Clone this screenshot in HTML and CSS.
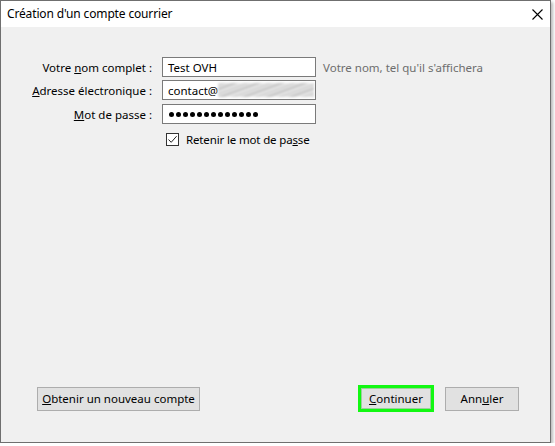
FILE: index.html
```html
<!DOCTYPE html>
<html lang="fr">
<head>
<meta charset="utf-8">
<title>Création d'un compte courrier</title>
<link rel="stylesheet" href="styles.css">
</head>
<body>
<div class="window">
  <div class="titlebar">
    <span class="title">Création d'un compte courrier</span>
    <svg class="close" width="11" height="11" viewBox="0 0 11 11"><path d="M0.5 0.5 L10.5 10.5 M10.5 0.5 L0.5 10.5" stroke="#000" stroke-width="1.1" fill="none"/></svg>
  </div>
  <div class="content">
    <div class="form">
      <div class="row">
        <label class="label">Votre <u>n</u>om complet :</label>
        <div class="field">Test OVH</div>
        <span class="hint">Votre nom, tel qu'il s'affichera</span>
      </div>
      <div class="row row2">
        <label class="label"><u>A</u>dresse électronique :</label>
        <div class="field">contact@<span class="smudge"></span></div>
      </div>
      <div class="row row3">
        <label class="label"><u>M</u>ot de passe :</label>
        <div class="field dots">
          <i></i><i></i><i></i><i></i><i></i><i></i><i></i><i></i><i></i><i></i><i></i><i></i><i></i>
        </div>
      </div>
      <div class="checkrow">
        <span class="checkbox"><svg width="11" height="11" viewBox="0 0 11 11"><path d="M1.5 5.5 L4.2 8.3 L9.6 2.2" stroke="#222" stroke-width="1" fill="none"/></svg></span>
        <span>Retenir le mot de pa<u>s</u>se</span>
      </div>
    </div>
    <div class="footer">
      <button class="btn btn-new"><u>O</u>btenir un nouveau compte</button>
      <span class="focus"><button class="btn btn-go"><u>C</u>ontinuer</button></span>
      <button class="btn btn-cancel">Ann<u>u</u>ler</button>
    </div>
  </div>
</div>
</body>
</html>
```
FILE: styles.css
```css
html, body {
  margin: 0;
  padding: 0;
  background: #ffffff;
}
body {
  font-family: "Noto Sans", "Open Sans", sans-serif;
  font-size: 11.5px;
  color: #000;
}
.window {
  width: 551px;
  height: 443px;
  box-sizing: border-box;
  border: 1px solid #6f6f6f;
  display: flex;
  flex-direction: column;
  box-shadow: 2px 2px 3px rgba(0, 0, 0, 0.28);
}
.titlebar {
  height: 26px;
  flex: none;
  background: #fff;
  display: flex;
  align-items: center;
  padding-left: 6px;
  padding-right: 7px;
}
.title {
  font-size: 12px;
  letter-spacing: -0.15px;
  margin-top: -1px;
}
.close {
  margin-left: auto;
  display: block;
}
.content {
  flex: 1;
  background: #f0f0f0;
  display: flex;
  flex-direction: column;
  padding-top: 30px;
}
.form {
  display: flex;
  flex-direction: column;
}
.row {
  display: flex;
  align-items: center;
  height: 20px;
}
.row2 { margin-top: 3px; }
.row3 { margin-top: 4px; }
.label {
  width: 151px;
  text-align: right;
  margin-right: 10px;
  flex: none;
}
.field {
  width: 154px;
  height: 20px;
  box-sizing: border-box;
  border: 1px solid #7a7a7a;
  background: #fff;
  padding-left: 5px;
  display: flex;
  align-items: center;
  overflow: hidden;
  white-space: nowrap;
  flex: none;
}
.smudge {
  flex: 1;
  align-self: stretch;
  margin: 2px 1px 2px 0;
  background:
    repeating-linear-gradient(160deg, #f2f2f2 0px, #cfcfcf 2px, #e6e6e6 4px, #bdbdbd 6px, #ececec 8px);
  filter: blur(0.8px);
}
.dots {
  gap: 2px;
  padding-left: 6px;
}
.dots i {
  display: block;
  width: 5px;
  height: 5px;
  border-radius: 50%;
  background: #000;
}
.hint {
  margin-left: 7px;
  color: #6d6d6d;
}
.checkrow {
  display: flex;
  align-items: center;
  margin-top: 9px;
  padding-left: 165px;
  height: 13px;
  letter-spacing: -0.15px;
}
.checkbox {
  width: 13px;
  height: 13px;
  box-sizing: border-box;
  border: 1px solid #333;
  background: #fff;
  display: flex;
  align-items: center;
  justify-content: center;
  margin-right: 7px;
  flex: none;
}
.checkbox svg { display: block; }
.footer {
  margin-top: auto;
  display: flex;
  align-items: center;
  padding: 0 31px 30px 36px;
}
.btn {
  font-family: inherit;
  font-size: 11.5px;
  color: #000;
  background: #e1e1e1;
  border: 1px solid #adadad;
  height: 24px;
  padding: 0;
  margin: 0;
  box-sizing: border-box;
}
.btn-new { width: 163px; }
.focus {
  margin-left: auto;
  border: 3px solid #12f812;
  display: flex;
}
.btn-go {
  width: 70px;
  height: 21px;
  border-color: #9ccf9c;
}
.btn-cancel {
  width: 74px;
  margin-left: 11px;
}
```
